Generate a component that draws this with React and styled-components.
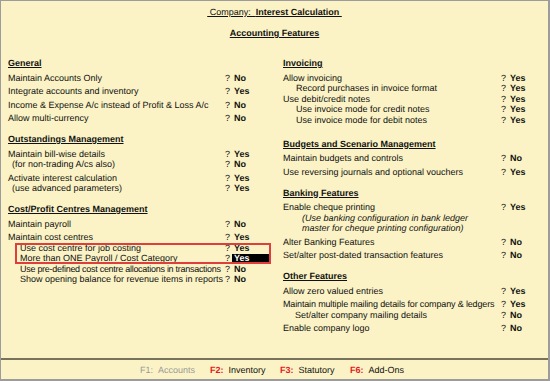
import React from "react";
import styled, { createGlobalStyle, css } from "styled-components";

const GlobalStyle = createGlobalStyle`
  html, body {
    margin: 0;
    padding: 0;
    background: #ffffff;
  }
  body {
    font-family: "Liberation Sans", Arial, sans-serif;
    text-rendering: geometricPrecision;
  }
`;

const Frame = styled.div`
  width: 550px;
  height: 381px;
  box-sizing: border-box;
  display: flex;
  flex-direction: column;
  background: #fbf3c5;
  border: 1px solid #9c9c9c;
  border-right-width: 2px;
  border-bottom-width: 2px;
  color: #111;
  font-size: 9px;
`;

const Header = styled.header`
  padding-top: 5px;
  display: flex;
  flex-direction: column;
  align-items: center;
  gap: 9px;
  line-height: 12px;
`;

const Title = styled.div`
  text-decoration: underline;
  white-space: pre;
  b {
    font-weight: bold;
  }
`;

const SubTitle = styled.div`
  font-weight: bold;
  text-decoration: underline;
`;

const Columns = styled.main`
  flex: 1;
  display: grid;
  grid-template-columns: 263px 1fr;
  column-gap: 12px;
  align-items: start;
  padding: 18px 0 0 7px;
`;

const Column = styled.div`
  --label-w: ${(p) => p.$labelW}px;
  display: flex;
  flex-direction: column;
  gap: 9.5px;
`;

const Section = styled.section`
  display: flex;
  flex-direction: column;
  gap: 3px;
  margin-top: ${(p) => (p.$push ? 3 : 0)}px;
`;

const Heading = styled.h3`
  margin: 0 0 0.5px;
  font-size: 9px;
  font-weight: bold;
  line-height: 12px;
  text-decoration: underline;
`;

const Group = styled.div`
  display: flex;
  flex-direction: column;
`;

const Row = styled.div`
  display: grid;
  grid-template-columns: var(--label-w) 7px auto;
  height: 10.5px;
  line-height: 10.5px;
  white-space: nowrap;
`;

const Label = styled.span`
  padding-left: ${(p) => p.$indent || 0}px;
  font-style: ${(p) => (p.$italic ? "italic" : "normal")};
  letter-spacing: ${(p) => p.$tight || 0}px;
`;

const Value = styled.span`
  font-weight: bold;
  padding-left: 2px;
  ${(p) =>
    p.$selected &&
    css`
      align-self: center;
      width: 37px;
      box-sizing: border-box;
      line-height: 9px;
      background: #000;
      color: #fff;
    `}
`;

const Boxed = styled.div`
  margin-left: 7px;
  outline: 2px solid #e03d3d;
  outline-offset: -2px;
  ${Row} {
    grid-template-columns: calc(var(--label-w) - 7px) 7px auto;
  }
`;

const Footer = styled.footer`
  height: 19px;
  display: flex;
  align-items: center;
  padding-left: 139px;
  border-top: 2px solid #77735a;
`;

const FKey = styled.div`
  width: 70px;
  display: flex;
  color: ${(p) => (p.$off ? "#9a9a9a" : "#111")};
`;

const KeyName = styled.span`
  margin-right: 5px;
  color: ${(p) => (p.$off ? "#9a9a9a" : "#e5181e")};
  font-weight: ${(p) => (p.$off ? "normal" : "bold")};
`;

const Opt = ({ label, value, indent, selected, tight }) => (
  <Row>
    <Label $indent={indent} $tight={tight}>
      {label}
    </Label>
    <span>?</span>
    <Value $selected={selected}>{value}</Value>
  </Row>
);

const Note = ({ children, indent }) => (
  <Row>
    <Label $indent={indent} $italic>
      {children}
    </Label>
  </Row>
);

const keys = [
  { k: "F1:", t: "Accounts", off: true },
  { k: "F2:", t: "Inventory" },
  { k: "F3:", t: "Statutory" },
  { k: "F6:", t: "Add-Ons" },
];

export default function App() {
  return (
    <>
      <GlobalStyle />
      <Frame>
        <Header>
          <Title>
            {" Company:  "}
            <b>Interest Calculation </b>
          </Title>
          <SubTitle>Accounting Features</SubTitle>
        </Header>

        <Columns>
          <Column $labelW={217}>
            <Section>
              <Heading>General</Heading>
              <Group>
                <Opt label="Maintain Accounts Only" value="No" />
              </Group>
              <Group>
                <Opt label="Integrate accounts and inventory" value="Yes" />
              </Group>
              <Group>
                <Opt label="Income & Expense A/c instead of Profit & Loss A/c" value="No" />
              </Group>
              <Group>
                <Opt label="Allow multi-currency" value="No" />
              </Group>
            </Section>

            <Section>
              <Heading>Outstandings Management</Heading>
              <Group>
                <Opt label="Maintain bill-wise details" value="Yes" />
                <Opt label="(for non-trading A/cs also)" value="No" indent={4} />
              </Group>
              <Group>
                <Opt label="Activate interest calculation" value="Yes" />
                <Opt label="(use advanced parameters)" value="Yes" indent={4} />
              </Group>
            </Section>

            <Section>
              <Heading>Cost/Profit Centres Management</Heading>
              <Group>
                <Opt label="Maintain payroll" value="No" />
              </Group>
              <Group>
                <Opt label="Maintain cost centres" value="Yes" />
                <Boxed>
                  <Opt label="Use cost centre for job costing" value="Yes" indent={5} />
                  <Opt
                    label="More than ONE Payroll / Cost Category"
                    value="Yes"
                    indent={5}
                    selected
                  />
                </Boxed>
                <Opt
                  label="Use pre-defined cost centre allocations in transactions"
                  value="No"
                  indent={12}
                  tight={-0.28}
                />
                <Opt
                  label="Show opening balance for revenue items in reports"
                  value="No"
                  indent={12}
                />
              </Group>
            </Section>
          </Column>

          <Column $labelW={218}>
            <Section>
              <Heading>Invoicing</Heading>
              <Group>
                <Opt label="Allow invoicing" value="Yes" />
                <Opt label="Record purchases in invoice format" value="Yes" indent={13} />
                <Opt label="Use debit/credit notes" value="Yes" />
                <Opt label="Use invoice mode for credit notes" value="Yes" indent={13} />
                <Opt label="Use invoice mode for debit notes" value="Yes" indent={13} />
              </Group>
            </Section>

            <Section $push>
              <Heading>Budgets and Scenario Management</Heading>
              <Group>
                <Opt label="Maintain budgets and controls" value="No" />
              </Group>
              <Group>
                <Opt label="Use reversing journals and optional vouchers" value="Yes" />
              </Group>
            </Section>

            <Section>
              <Heading>Banking Features</Heading>
              <Group>
                <Opt label="Enable cheque printing" value="Yes" />
                <Note indent={19}>(Use banking configuration in bank ledger</Note>
                <Note indent={19}>master for cheque printing configuration)</Note>
              </Group>
              <Group>
                <Opt label="Alter Banking Features" value="No" />
              </Group>
              <Group>
                <Opt label="Set/alter post-dated transaction features" value="No" />
              </Group>
            </Section>

            <Section>
              <Heading>Other Features</Heading>
              <Group>
                <Opt label="Allow zero valued entries" value="Yes" />
              </Group>
              <Group>
                <Opt
                  label="Maintain multiple mailing details for company & ledgers"
                  value="Yes"
                  tight={-0.15}
                />
                <Opt label="Set/alter company mailing details" value="No" indent={12} />
              </Group>
              <Group>
                <Opt label="Enable company logo" value="No" />
              </Group>
            </Section>
          </Column>
        </Columns>

        <Footer>
          {keys.map((f) => (
            <FKey key={f.k} $off={f.off}>
              <KeyName $off={f.off}>{f.k}</KeyName>
              {f.t}
            </FKey>
          ))}
        </Footer>
      </Frame>
    </>
  );
}
